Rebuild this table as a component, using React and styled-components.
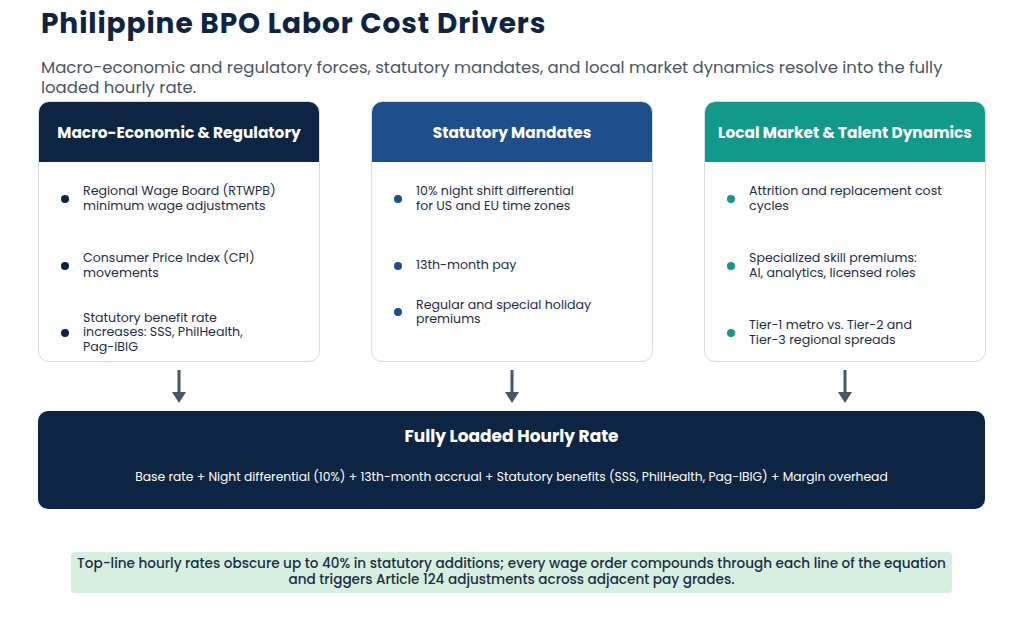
import React from 'react';
import styled, { createGlobalStyle } from 'styled-components';

const GlobalStyle = createGlobalStyle`
  body {
    margin: 0;
    background: #ffffff;
    font-family: "Poppins", "Open Sans", "Noto Sans", sans-serif;
  }
`;

const COLORS = {
  NAVY: '#0d2543',
  BLUE: '#1f4e8c',
  TEAL: '#13998a',
  TEXT: '#1e2d47',
  MUTED: '#4a5568',
  BORDER: '#d6dde7',
};

const Page = styled.div`
  width: 1024px;
  height: 632px;
  box-sizing: border-box;
  padding: 6px 38px 0;
`;

const Title = styled.h1`
  margin: 0 0 0 3px;
  font-size: 28px;
  line-height: 36px;
  font-weight: 700;
  letter-spacing: 0.9px;
  color: ${COLORS.NAVY};
`;

const Subtitle = styled.p`
  margin: 16px 0 0 3px;
  font-size: 16.5px;
  line-height: 20px;
  color: ${COLORS.MUTED};
`;

const CardsRow = styled.div`
  display: grid;
  grid-template-columns: repeat(3, 282px);
  column-gap: 51px;
  margin-top: 3px;
`;

const Card = styled.div`
  display: flex;
  flex-direction: column;
  height: 261px;
  border: 1px solid ${COLORS.BORDER};
  border-radius: 11px;
  overflow: hidden;
  background: #fff;
  box-sizing: border-box;
`;

const CardHeader = styled.div`
  flex: 0 0 60px;
  display: flex;
  align-items: center;
  justify-content: center;
  background: ${(p) => p.$color};
  color: #fff;
  font-size: 15.4px;
  font-weight: 700;
`;

const CardBody = styled.ul`
  flex: 1;
  margin: 0;
  padding: 3px 0 0;
  list-style: none;
`;

const Item = styled.li`
  height: ${(p) => p.$h || 67}px;
  display: flex;
  align-items: center;
  gap: 14px;
  padding-left: 22px;
  color: ${COLORS.TEXT};
  font-size: 12.6px;
  line-height: 14.5px;
  white-space: nowrap;
`;

const Dot = styled.span`
  flex: 0 0 8px;
  height: 8px;
  border-radius: 50%;
  background: ${(p) => p.$color};
`;

const ArrowRow = styled.div`
  display: grid;
  grid-template-columns: repeat(3, 282px);
  column-gap: 51px;
  padding: 8px 0 8px;
`;

const ArrowCell = styled.div`
  display: flex;
  justify-content: center;
  height: 33px;
`;

const ResultBox = styled.div`
  height: 98px;
  width: 947px;
  box-sizing: border-box;
  border-radius: 10px;
  background: ${COLORS.NAVY};
  color: #fff;
  display: flex;
  flex-direction: column;
  align-items: center;
  padding-top: 13px;
`;

const ResultTitle = styled.div`
  font-size: 17px;
  font-weight: 700;
  line-height: 24px;
`;

const Formula = styled.div`
  margin-top: 21px;
  font-size: 12.3px;
  line-height: 16px;
`;

const Note = styled.div`
  margin: 43px 0 0 33px;
  width: 881px;
  height: 41px;
  box-sizing: border-box;
  border-radius: 4px;
  background: #d6efe0;
  color: ${COLORS.TEXT};
  font-size: 13.6px;
  font-weight: 500;
  line-height: 16px;
  text-align: center;
  padding-top: 4px;
`;

const Arrow = () => (
  <svg width="16" height="33" viewBox="0 0 16 33">
    <rect x="6.5" y="0" width="3" height="23" fill={COLORS.MUTED} />
    <path d="M1 22 L15 22 L8 33 Z" fill={COLORS.MUTED} />
  </svg>
);

const lines = (arr) =>
  arr.map((l, i) => (
    <React.Fragment key={i}>
      {i > 0 && <br />}
      {l}
    </React.Fragment>
  ));

const CARDS = [
  {
    title: 'Macro-Economic & Regulatory',
    color: COLORS.NAVY,
    items: [
      { text: ['Regional Wage Board (RTWPB)', 'minimum wage adjustments'] },
      { text: ['Consumer Price Index (CPI)', 'movements'] },
      { text: ['Statutory benefit rate', 'increases: SSS, PhilHealth,', 'Pag-IBIG'] },
    ],
  },
  {
    title: 'Statutory Mandates',
    color: COLORS.BLUE,
    items: [
      { text: ['10% night shift differential', 'for US and EU time zones'] },
      { text: ['13th-month pay'] },
      { text: ['Regular and special holiday', 'premiums'], h: 26 },
    ],
  },
  {
    title: 'Local Market & Talent Dynamics',
    color: COLORS.TEAL,
    items: [
      { text: ['Attrition and replacement cost', 'cycles'] },
      { text: ['Specialized skill premiums:', 'AI, analytics, licensed roles'] },
      { text: ['Tier-1 metro vs. Tier-2 and', 'Tier-3 regional spreads'] },
    ],
  },
];

export default function App() {
  return (
    <>
      <GlobalStyle />
      <Page>
        <Title>Philippine BPO Labor Cost Drivers</Title>
        <Subtitle>
          Macro-economic and regulatory forces, statutory mandates, and local market dynamics resolve into the fully
          <br />
          loaded hourly rate.
        </Subtitle>
        <CardsRow>
          {CARDS.map((card) => (
            <Card key={card.title}>
              <CardHeader $color={card.color}>{card.title}</CardHeader>
              <CardBody>
                {card.items.map((item, i) => (
                  <Item key={i} $h={item.h}>
                    <Dot $color={card.color} />
                    <span>{lines(item.text)}</span>
                  </Item>
                ))}
              </CardBody>
            </Card>
          ))}
        </CardsRow>
        <ArrowRow>
          {CARDS.map((card) => (
            <ArrowCell key={card.title}>
              <Arrow />
            </ArrowCell>
          ))}
        </ArrowRow>
        <ResultBox>
          <ResultTitle>Fully Loaded Hourly Rate</ResultTitle>
          <Formula>
            Base rate + Night differential (10%) + 13th-month accrual + Statutory benefits (SSS, PhilHealth, Pag-IBIG) + Margin overhead
          </Formula>
        </ResultBox>
        <Note>
          Top-line hourly rates obscure up to 40% in statutory additions; every wage order compounds through each line of the equation
          <br />
          and triggers Article 124 adjustments across adjacent pay grades.
        </Note>
      </Page>
    </>
  );
}
